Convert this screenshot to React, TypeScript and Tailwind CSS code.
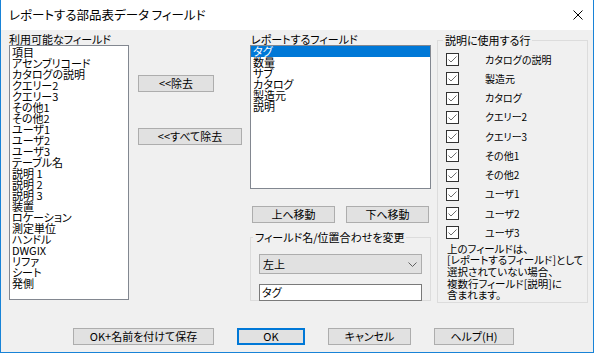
import React from 'react';

const available = [
  '項目',
  'アセンブリコード',
  'カタログの説明',
  'クエリー2',
  'クエリー3',
  'その他1',
  'その他2',
  'ユーザ1',
  'ユーザ2',
  'ユーザ3',
  'テーブル名',
  '説明 1',
  '説明 2',
  '説明 3',
  '装置',
  'ロケーション',
  '測定単位',
  'ハンドル',
  'DWGIX',
  'リファ',
  'シート',
  '発側',
];

const reported = ['タグ', '数量', 'サブ', 'カタログ', '製造元', '説明'];

const descRows = [
  'カタログの説明',
  '製造元',
  'カタログ',
  'クエリー2',
  'クエリー3',
  'その他1',
  'その他2',
  'ユーザ1',
  'ユーザ2',
  'ユーザ3',
];

function Btn({ className, children }: { className: string; children: React.ReactNode }) {
  return (
    <div
      className={`h-[17px] flex items-center justify-center bg-[#e1e1e1] border border-[#adadad] text-[11px] leading-none ${className}`}
    >
      {children}
    </div>
  );
}

function Check() {
  return (
    <div className="w-[13px] h-[13px] bg-white border border-[#333333] shrink-0">
      <svg width="11" height="11" viewBox="0 0 11 11">
        <polyline points="1.5,5.5 4,8 9.5,2.5" fill="none" stroke="#6e6e6e" strokeWidth="1" />
      </svg>
    </div>
  );
}

export default function App() {
  return (
    <div className="w-[594px] h-[353px] flex flex-col bg-[#f0f0f0] border-x border-b border-[#1883d7] text-black font-['Noto_Sans_CJK_JP',sans-serif] [font-feature-settings:'palt'] overflow-hidden">
      {/* title bar */}
      <div className="h-[30px] shrink-0 bg-white flex items-center justify-between pl-[8px] pr-[10px]">
        <span className="text-[12.5px] leading-none">レポートする部品表データ フィールド</span>
        <svg width="10" height="10" viewBox="0 0 10 10">
          <path d="M0.5 0.5 L9.5 9.5 M9.5 0.5 L0.5 9.5" stroke="#000" strokeWidth="1" />
        </svg>
      </div>

      {/* main area */}
      <div className="h-[273px] flex pl-[8px] pt-[3px]">
        {/* available fields */}
        <div className="w-[120px] flex flex-col">
          <div className="h-[12px] text-[11px] leading-[12px] whitespace-nowrap">利用可能なフィールド</div>
          <div className="h-[255px] bg-white border border-[#828790] pl-[2px] pt-[1px]">
            {available.map((t) => (
              <div key={t} className="h-[11px] text-[11px] leading-[11px] whitespace-nowrap">
                {t}
              </div>
            ))}
          </div>
        </div>

        {/* remove buttons */}
        <div className="w-[104px] ml-[9px] flex flex-col">
          <Btn className="w-[76px] mt-[42px]">&lt;&lt;除去</Btn>
          <Btn className="w-[104px] mt-[36px]">&lt;&lt;すべて除去</Btn>
        </div>

        {/* reported fields */}
        <div className="w-[181px] ml-[8px] flex flex-col">
          <div className="h-[12px] text-[11px] leading-[12px] whitespace-nowrap pl-[1px]">レポートするフィールド</div>
          <div className="h-[144px] bg-white border border-[#828790]">
            {reported.map((t, i) => (
              <div
                key={t}
                className={`h-[11px] text-[11px] leading-[11px] pl-[2px] whitespace-nowrap ${
                  i === 0 ? 'bg-[#0078d7] text-white' : ''
                }`}
              >
                {t}
              </div>
            ))}
          </div>
          <div className="flex gap-[11px] ml-[2px] mt-[17px]">
            <Btn className="w-[83px]">上へ移動</Btn>
            <Btn className="w-[83px]">下へ移動</Btn>
          </div>
          <fieldset className="mt-[8px] h-[70px] border border-[#dcdcdc]">
            <legend className="ml-[2px] px-[2px] text-[11px] leading-[12px]">フィールド名/位置合わせを変更</legend>
            <div className="ml-[8px] mt-[11px] w-[163px] h-[20px] bg-[#e1e1e1] border border-[#adadad] flex items-center justify-between pl-[3px] pr-[4px]">
              <span className="text-[11px] leading-none">左上</span>
              <svg width="9" height="5" viewBox="0 0 9 5">
                <polyline points="0.5,0.5 4.5,4.5 8.5,0.5" fill="none" stroke="#606060" strokeWidth="1" />
              </svg>
            </div>
            <div className="ml-[8px] mt-[10px] w-[163px] h-[17px] bg-white border border-[#7a7a7a] flex items-center pl-[2px]">
              <span className="text-[11px] leading-none">タグ</span>
            </div>
          </fieldset>
        </div>

        {/* description rows */}
        <fieldset className="ml-[6px] mt-[1px] w-[151px] h-[269px] border border-[#dcdcdc]">
          <legend className="ml-[5px] px-[2px] text-[11px] leading-[12px]">説明に使用する行</legend>
          <div className="mt-[4px] flex flex-col pl-[8px]">
            {descRows.map((t) => (
              <div key={t} className="h-[19.25px] flex items-center">
                <Check />
                <span className="ml-[26px] text-[10px] leading-none whitespace-nowrap">{t}</span>
              </div>
            ))}
          </div>
          <div className="pl-[9px] text-[10.5px] leading-[11.7px]">
            <div>上のフィールドは、</div>
            <div>[レポートするフィールド]として</div>
            <div>選択されていない場合、</div>
            <div>複数行フィールド[説明]に</div>
            <div>含まれます。</div>
          </div>
        </fieldset>
      </div>

      {/* bottom buttons */}
      <div className="flex ml-[72px] mt-[25px] gap-[23px]">
        <Btn className="w-[141px]">OK+名前を付けて保存</Btn>
        <div className="w-[68px] h-[17px] flex items-center justify-center bg-[#e1e1e1] border-2 border-[#0078d7] text-[11px] leading-none">
          OK
        </div>
        <Btn className="w-[83px]">キャンセル</Btn>
        <Btn className="w-[80px]">ヘルプ(H)</Btn>
      </div>
    </div>
  );
}
